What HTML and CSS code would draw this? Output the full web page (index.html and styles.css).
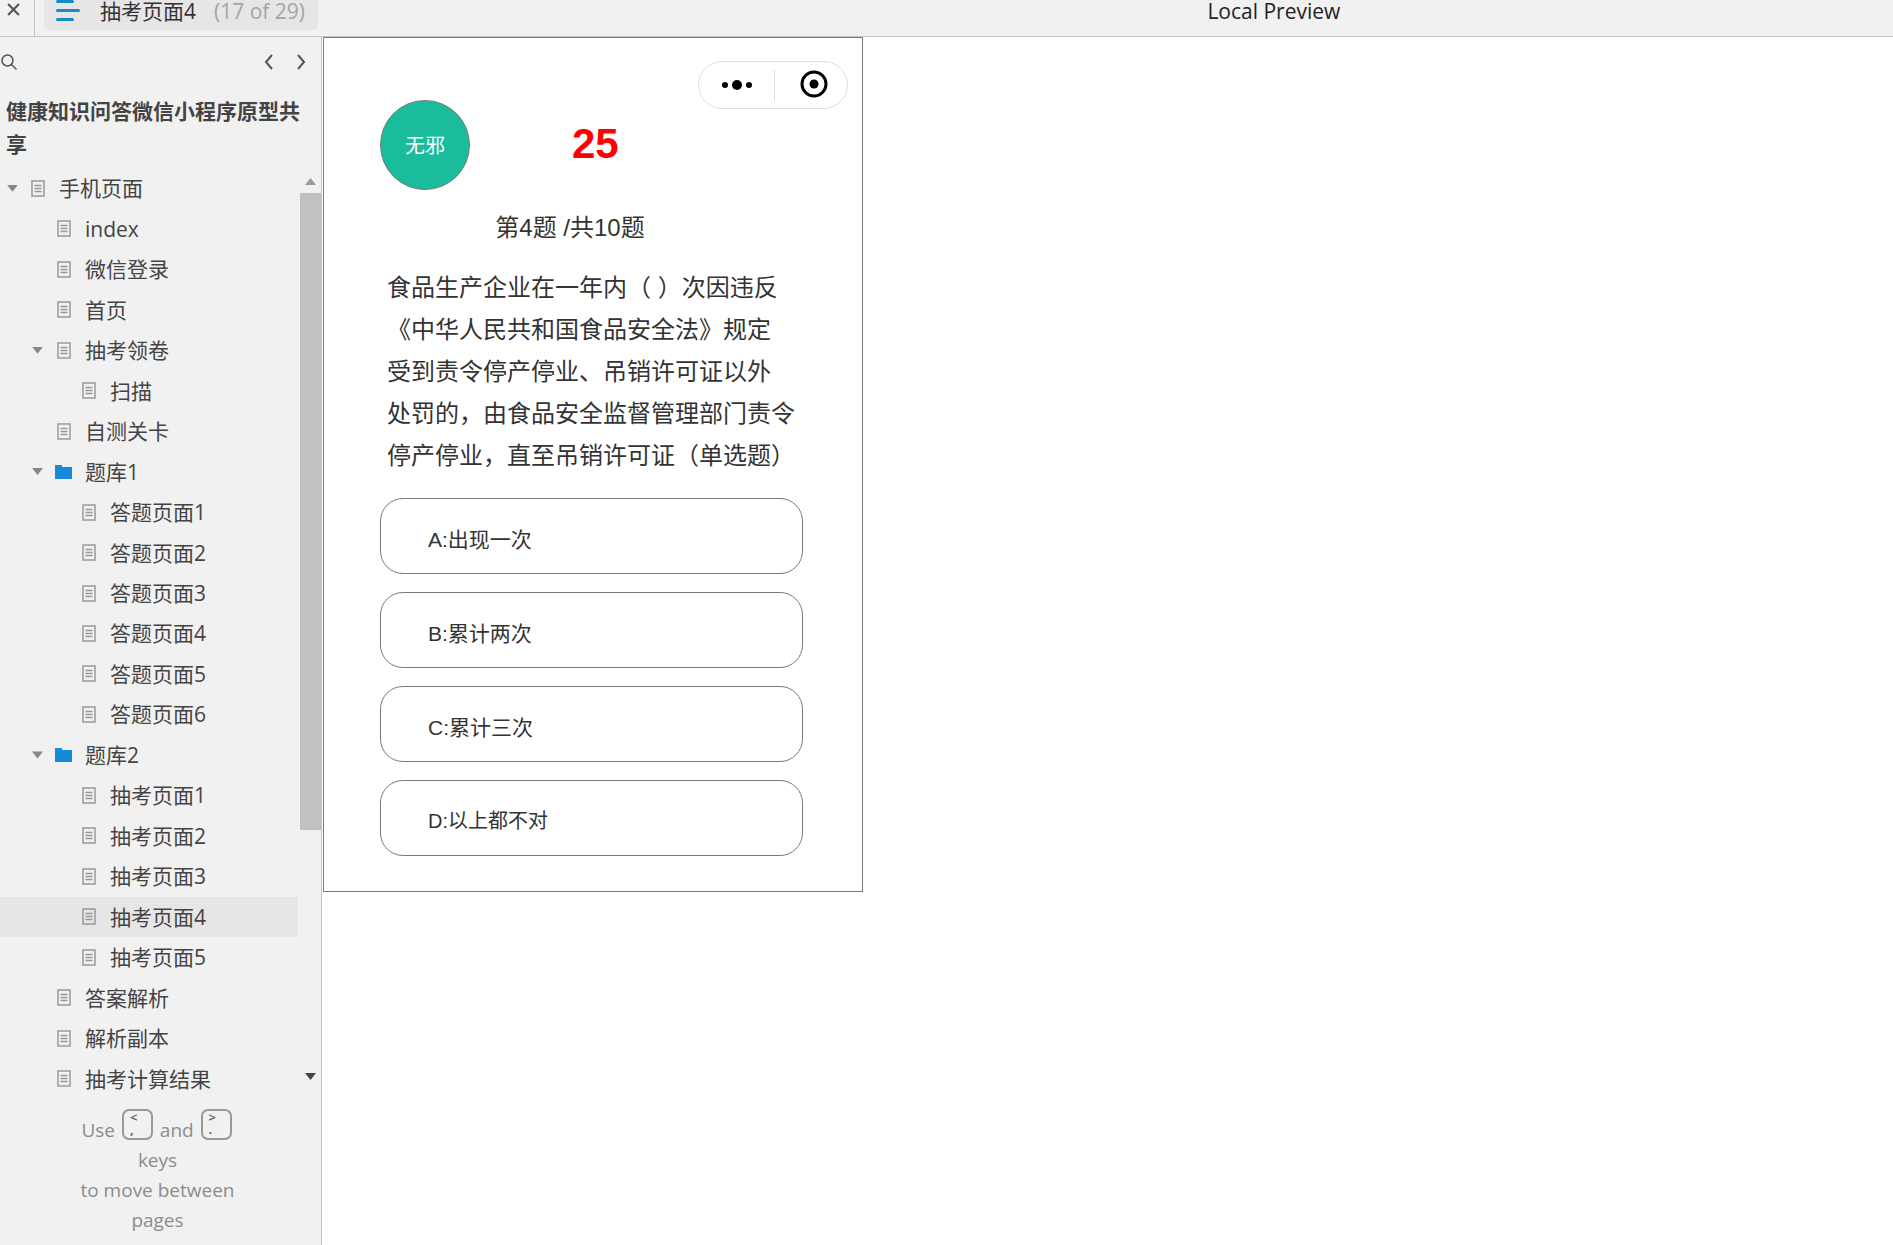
FILE: index.html
```
<!DOCTYPE html>
<html lang="zh-CN">
<head>
<meta charset="utf-8" />
<title>抽考页面4</title>
<link rel="stylesheet" href="styles.css">
</head>

<body>
<svg class="symbols" aria-hidden="true">
	<symbol id="page" viewBox="0 0 14 17"><path d="M1 1h12v15H1zM3.500 5.500h7M3.500 8.500h7M3.500 11.500h7" fill="none" stroke="#999" stroke-width="1.500"/></symbol>
	<symbol id="folder" viewBox="0 0 17 14"><path d="M0 0h7v2h10v12H0z" fill="#148adb"/></symbol>
</svg>
<header class="topbar">
	<button class="close" aria-label="关闭"><svg width="13" height="13" viewBox="0 0 12 12"><path d="M1 1l10 10M11 1L1 11" stroke="#555" stroke-width="2"/></svg></button>
	<button class="tab">
		<svg width="24" height="22" viewBox="0 0 24 22"><path d="M1.500 1.500h15M1.500 10.500h21M1.500 19.500h15" stroke="#148dc4" stroke-width="3" stroke-linecap="round"/></svg>
		<span>抽考页面4</span>
		<span class="count">(17 of 29)</span>
	</button>
	<div class="preview">Local Preview</div>
</header>
<div class="wrap">
	<aside class="sidebar">
		<div class="tools">
			<button aria-label="搜索"><svg width="16" height="16" viewBox="0 0 16 16" fill="none" stroke="#555" stroke-width="1.500"><circle cx="6.500" cy="6.500" r="5.500"/><path d="M10.500 10.500l5 5"/></svg></button>
			<button class="prev" aria-label="上一页"><svg width="9" height="16" viewBox="0 0 9 16"><path d="M8 1L2 8l6 7" fill="none" stroke="#555" stroke-width="2"/></svg></button>
			<button aria-label="下一页"><svg width="9" height="16" viewBox="0 0 9 16"><path d="M1 1l6 7-6 7" fill="none" stroke="#555" stroke-width="2"/></svg></button>
		</div>
		<h1>健康知识问答微信小程序原型共享</h1>
		<nav class="tree">
			<ul>
				<li class="l1"><button class="open" aria-label="折叠"></button><a href="#"><svg class="ico"><use href="#page"/></svg>手机页面</a></li>
				<li class="l2"><a href="#"><svg class="ico"><use href="#page"/></svg>index</a></li>
				<li class="l2"><a href="#"><svg class="ico"><use href="#page"/></svg>微信登录</a></li>
				<li class="l2"><a href="#"><svg class="ico"><use href="#page"/></svg>首页</a></li>
				<li class="l2"><button class="open" aria-label="折叠"></button><a href="#"><svg class="ico"><use href="#page"/></svg>抽考领卷</a></li>
				<li class="l3"><a href="#"><svg class="ico"><use href="#page"/></svg>扫描</a></li>
				<li class="l2"><a href="#"><svg class="ico"><use href="#page"/></svg>自测关卡</a></li>
				<li class="l2"><button class="open" aria-label="折叠"></button><a href="#"><svg class="ico folder"><use href="#folder"/></svg>题库1</a></li>
				<li class="l3"><a href="#"><svg class="ico"><use href="#page"/></svg>答题页面1</a></li>
				<li class="l3"><a href="#"><svg class="ico"><use href="#page"/></svg>答题页面2</a></li>
				<li class="l3"><a href="#"><svg class="ico"><use href="#page"/></svg>答题页面3</a></li>
				<li class="l3"><a href="#"><svg class="ico"><use href="#page"/></svg>答题页面4</a></li>
				<li class="l3"><a href="#"><svg class="ico"><use href="#page"/></svg>答题页面5</a></li>
				<li class="l3"><a href="#"><svg class="ico"><use href="#page"/></svg>答题页面6</a></li>
				<li class="l2"><button class="open" aria-label="折叠"></button><a href="#"><svg class="ico folder"><use href="#folder"/></svg>题库2</a></li>
				<li class="l3"><a href="#"><svg class="ico"><use href="#page"/></svg>抽考页面1</a></li>
				<li class="l3"><a href="#"><svg class="ico"><use href="#page"/></svg>抽考页面2</a></li>
				<li class="l3"><a href="#"><svg class="ico"><use href="#page"/></svg>抽考页面3</a></li>
				<li class="l3 on"><a href="#"><svg class="ico"><use href="#page"/></svg>抽考页面4</a></li>
				<li class="l3"><a href="#"><svg class="ico"><use href="#page"/></svg>抽考页面5</a></li>
				<li class="l2"><a href="#"><svg class="ico"><use href="#page"/></svg>答案解析</a></li>
				<li class="l2"><a href="#"><svg class="ico"><use href="#page"/></svg>解析副本</a></li>
				<li class="l2"><a href="#"><svg class="ico"><use href="#page"/></svg>抽考计算结果</a></li>
			</ul>
			<div class="scroll">
				<i class="up"></i>
				<div class="track"><div class="thumb"></div></div>
				<i class="down"></i>
			</div>
		</nav>
		<div class="tips">
			<p>Use <kbd>&lt;<br>,</kbd> and <kbd>&gt;<br>.</kbd></p>
			<p>keys</p>
			<p>to move between</p>
			<p>pages</p>
		</div>
	</aside>
	<main class="content">
		<section class="phone">
			<div class="capsule">
				<button class="more" aria-label="更多"><svg width="30" height="10" viewBox="0 0 30 10"><circle cx="3" cy="5" r="3"/><circle cx="15" cy="5" r="5"/><circle cx="27" cy="5" r="3"/></svg></button>
				<button class="exit" aria-label="关闭小程序"><svg width="28" height="28" viewBox="0 0 28 28"><circle cx="14" cy="14" r="12" fill="none" stroke="#000" stroke-width="3"/><circle cx="14" cy="14" r="4.500"/></svg></button>
			</div>
			<div class="user">
				<div class="avatar">无邪</div>
				<strong class="time">25</strong>
			</div>
			<p class="step">第4题 /共10题</p>
			<p class="question">食品生产企业在一年内（ ）次因违反<br>《中华人民共和国食品安全法》规定<br>受到责令停产停业、吊销许可证以外<br>处罚的，由食品安全监督管理部门责令<br>停产停业，直至吊销许可证（单选题）</p>
			<div class="options">
				<button>A:出现一次</button>
				<button>B:累计两次</button>
				<button>C:累计三次</button>
				<button class="small">D:以上都不对</button>
			</div>
		</section>
	</main>
</div>
</body>
</html>
```
FILE: styles.css
```
*{ padding:0; margin:0; box-sizing:border-box;}
ul{ list-style:none;}
a{ color:inherit; text-decoration:none;}
button{ background:none; border:0; font:inherit; color:inherit; cursor:pointer;}
svg{ display:block; flex:none;}
.symbols{ display:none;}

body{ height:100vh; display:flex; flex-direction:column; background:#fff; color:#444; font:21px/33px "Open Sans","Noto Sans CJK SC",sans-serif;}

/*顶部*/
.topbar{ display:flex; height:37px; flex:none; background:#f1f1f1; border-bottom:1px solid #c4c4c4;}
.close{ width:35px; padding:3px 0 0 7px; border-right:1px solid #c4c4c4; display:flex;}
.tab{ display:flex; height:30px; margin-left:9px; padding:0 13px 0 12px; background:#e6e6e6; border-radius:0 0 5px 5px; line-height:22px; white-space:nowrap; color:#333;}
.tab span{ margin-left:20px;}
.tab .count{ margin-left:18px; color:#a5a5a5;}
.preview{ flex:1; padding-right:4px; margin-left:18%; text-align:center; line-height:22px; color:#222;}

.wrap{ flex:1; min-height:0; display:flex;}

/*左侧目录*/
.sidebar{ width:322px; flex:none; display:flex; flex-direction:column; background:#f1f1f1; border-right:1px solid #c4c4c4;}
.tools{ display:flex; gap:24px; padding:17px 15px 0 1px;}
.tools .prev{ margin-left:auto;}
.sidebar h1{ padding:25px 14px 7px 6px; font-size:21px; line-height:33px; font-weight:bold;}
.tree{ flex:1; min-height:0; display:flex; gap:2px;}
.tree ul{ flex:1; display:grid; grid-auto-rows:1fr;}
.tree li{ display:flex; align-items:center; min-height:0;}
.tree li.on{ background:#e6e6e6;}
.tree a{ display:flex; align-items:center; line-height:32px;}
.l1{ padding-left:7px;}
.l2{ padding-left:57px;}
.l3{ padding-left:82px;}
.ico{ width:14px; height:17px; margin-right:14px;}
.ico.folder{ width:17px; height:14px; margin:0 13px 0 -2px;}
.open{ width:11px; height:7px; margin-right:13px; background:#888; clip-path:polygon(0 0,100% 0,50% 100%);}
.l2 .open{ margin-right:14px; margin-left:-25px;}
.scroll{ width:21px; display:flex; flex-direction:column; align-items:center; padding:10px 0 19px;}
.scroll i{ width:11px; height:7px; background:#999; clip-path:polygon(50% 0,100% 100%,0 100%);}
.scroll .down{ background:#444; clip-path:polygon(0 0,100% 0,50% 100%);}
.track{ flex:1; width:100%; padding:8px 0;}
.thumb{ height:73%; background:#c1c1c1;}
.tips{ padding:10px 6px 10px 0; text-align:center; font-size:19px; line-height:30px; color:#8c8c8c;}
.tips kbd{ display:inline-block; overflow:hidden; width:31px; height:31px; margin:0 2px; padding:0 0 0 6px; border:2px solid #999; border-radius:7px; text-align:left; vertical-align:-3px; font:bold 13px/12px "Open Sans",sans-serif; color:#666;}

/*手机页面*/
.content{ flex:1; min-width:0; overflow:auto; padding-left:1px; font-family:"Liberation Sans","Noto Sans CJK SC",sans-serif; color:#333;}
.phone{ position:relative; max-width:540px; padding:62px 59px 35px 56px; border:1px solid #797979;}
.capsule{ position:absolute; top:23px; right:14px; width:150px; height:48px; display:flex; align-items:center; border:1px solid #e0e0e0; border-radius:24px;}
.capsule button{ height:31px; display:flex; align-items:center; justify-content:center;}
.capsule .more{ width:76px; border-right:1px solid #ddd;}
.capsule .exit{ flex:1; padding:0 0 2px 5px;}
.user{ display:flex; align-items:center;}
.avatar{ width:90px; height:90px; border:1px solid #797979; border-radius:50%; background:#1abc9c; color:#fff; font-size:20px; line-height:90px; text-align:center;}
.time{ margin-left:102px; padding-bottom:2px; color:#f00; font-size:42px; line-height:48px;}
.step{ margin-top:17px; padding-right:43px; text-align:center; font-size:24px; line-height:42px;}
.question{ margin-top:18px; padding-left:7px; font-size:24px; line-height:42px; white-space:nowrap;}
.options{ margin-top:21px; display:flex; flex-direction:column; gap:18px;}
.options button{ height:76px; padding:6px 0 0 47px; border:1px solid #797979; border-radius:23px; text-align:left; font-size:21px;}
.options .small{ font-size:20px;}
```
